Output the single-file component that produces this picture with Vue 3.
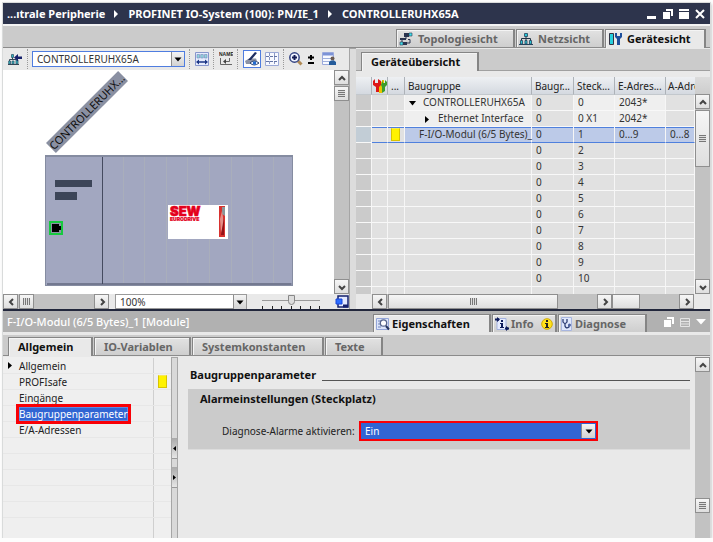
<script setup>
import { h, ref } from 'vue'

const paths = {
  up: 'M2 7 L5 4 L8 7',
  down: 'M2 4 L5 7 L8 4',
  left: 'M7 2 L4 5 L7 8',
  right: 'M4 2 L7 5 L4 8',
}
const Chevron = (props) =>
  h('svg', { width: 10, height: 10, viewBox: '0 0 10 10', 'aria-hidden': 'true' }, [
    h('path', { d: paths[props.dir], fill: 'none', stroke: '#444', 'stroke-width': 2 }),
  ])
Chevron.props = ['dir']

const Caret = () =>
  h('svg', { width: 8, height: 5, viewBox: '0 0 8 5', 'aria-hidden': 'true' }, [
    h('path', { d: 'M0.5 0.5 H7.5 L4 4.5 Z', fill: '#000' }),
  ])

const device = ref('CONTROLLERUHX65A')
const zoom = ref('100%')
const slider = ref(50)
const alarm = ref('Ein')

const rows = [
  { name: 'CONTROLLERUHX65A', kind: 'root', rack: '0', slot: '0', e: '2043*', a: '' },
  { name: 'Ethernet Interface', kind: 'child', rack: '0', slot: '0 X1', e: '2042*', a: '' },
  { name: 'F-I/O-Modul (6/5 Bytes)_', kind: 'module', rack: '0', slot: '1', e: '0...9', a: '0...8' },
  ...[2, 3, 4, 5, 6, 7, 8, 9, 10].map((n) => ({ name: '', kind: 'empty', rack: '0', slot: String(n), e: '', a: '' })),
]
const nav = [
  { label: 'Allgemein', open: true },
  { label: 'PROFIsafe', mark: true },
  { label: 'Eingänge' },
  { label: 'Baugruppenparameter', active: true },
  { label: 'E/A-Adressen' },
  {}, {}, {}, {}, {}, {},
]
const slots = [78, 99, 121, 142, 164, 186, 207, 228]
</script>

<template>
  <div class="window">
    <header class="titlebar">
      <nav class="crumbs">
        <span>...ıtrale Peripherie</span>
        <svg width="5" height="8" viewBox="0 0 5 8"><path d="M0 0 L4 4 L0 8Z" fill="#fff" /></svg>
        <span>PROFINET IO-System (100): PN/IE_1</span>
        <svg width="5" height="8" viewBox="0 0 5 8"><path d="M0 0 L4 4 L0 8Z" fill="#fff" /></svg>
        <span>CONTROLLERUHX65A</span>
      </nav>
      <div class="winbuttons">
        <button aria-label="Minimieren"><svg width="10" height="10" viewBox="0 0 10 10"><path d="M0 7H9V10H0Z" fill="#fff" /></svg></button>
        <button aria-label="Wiederherstellen"><svg width="10" height="10" viewBox="0 0 10 10"><path d="M3 0H10V7H8V2H3Z M0 3H7V10H0Z" fill="#fff" /></svg></button>
        <button aria-label="Maximieren"><svg width="10" height="10" viewBox="0 0 10 10"><path d="M0 0H10V2H0Z M0 3H10V10H0Z" fill="#fff" /></svg></button>
        <button aria-label="Schließen"><svg width="10" height="10" viewBox="0 0 10 10"><path d="M1 1L9 9M9 1L1 9" stroke="#fff" stroke-width="2" /></svg></button>
      </div>
    </header>

    <div class="viewbar">
      <button class="tab view topo">
        <svg width="14" height="14" viewBox="0 0 14 14"><path d="M3 11V7H7V3M9 7.500H11V11H8" fill="none" stroke="#2b3550" /><path d="M5 1H10V5H5Z" fill="#2b3550" /><path d="M10 1H13V4H10Z" fill="#3fe0ea" stroke="#2b3550" stroke-width=".6" /><path d="M1 6H7V8H1Z" fill="#2b3550" /><path d="M3 10H8V13H3Z" fill="#2b3550" /><path d="M1 10H4V13H1Z" fill="#3fe0ea" stroke="#2b3550" stroke-width=".6" /></svg>
        Topologiesicht
      </button>
      <button class="tab view netz">
        <svg width="14" height="14" viewBox="0 0 14 14"><path d="M7 4V9M2.500 9V6.500H11.500V9" fill="none" stroke="#234" /><path d="M5.500 1.500H8.500V4.500H5.500ZM1.500 8.500H3.500V12H1.500ZM6 8.500H8V12H6ZM10.500 8.500H12.500V12H10.500Z" fill="#2cc7d6" stroke="#26435c" stroke-width=".8" /><path d="M0 12.500H14" stroke="#26435c" /></svg>
        Netzsicht
      </button>
      <button class="tab view geraet on">
        <svg width="14" height="14" viewBox="0 0 14 14"><path d="M1.500 1.500H5.500V12.500H1.500Z" fill="#27cfdc" stroke="#334" /><path d="M7 1V5L9 7V13H12V7L14 5V1H12V4H9V1Z" fill="#1d4f9c" /></svg>
        Gerätesicht
      </button>
    </div>

    <main class="upper">
      <section class="device-pane">
        <div class="toolbar">
          <button class="tool" aria-label="Gerät"><svg width="15" height="14" viewBox="0 0 15 14"><path d="M4.500 5V8M1.500 9V7.500H8" stroke="#345" fill="none" /><path d="M3.500 2.500H5.500V5.500H3.500ZM.7 9H2.500V12H.7ZM4 9H6V12H4ZM8 8H10V12H8Z" fill="#2fb5be" stroke="#345c70" stroke-width=".8" /><path d="M6 5.500L10 2V4.500H14V7H10V9.500Z" fill="#15206b" /><path d="M0 12.500H11" stroke="#345" /></svg></button>
          <i class="sep"></i>
          <label class="combo devsel">
            <select v-model="device" aria-label="Gerät auswählen"><option>CONTROLLERUHX65A</option></select>
            <span class="drop"><Caret /></span>
          </label>
          <i class="sep"></i>
          <button class="tool" aria-label="Breite"><svg width="14" height="14" viewBox="0 0 14 14"><path d="M.5.500H13.500V13.500H.5Z" fill="#e6ecfd" stroke="#8796cc" /><path d="M2 2.500H4.500V6H2ZM5.700 2.500H8.300V6H5.700ZM9.500 2.500H12V6H9.500Z" fill="#8fd4dc" stroke="#7387b8" stroke-width=".6" /><path d="M1 10L4 7.500V9.300H10V7.500L13 10L10 12.500V10.700H4V12.500Z" fill="#1b3585" /></svg></button>
          <i class="sep"></i>
          <button class="tool" aria-label="Namen anzeigen"><svg width="14" height="14" viewBox="0 0 14 14"><text x="0" y="4" font-family="Liberation Sans" font-size="5" font-weight="700" fill="#222">NAME</text><path d="M1.500 6V12.500H13M10.500 6V9.500H6" stroke="#666" fill="none" /><path d="M4 9.500L7 7V12Z" fill="#444" /></svg></button>
          <i class="sep"></i>
          <button class="tool active" aria-label="Beschriftung"><svg width="16" height="16" viewBox="0 0 16 16"><path d="M1 10L5 7.500H12L13 10L10 13H2Z" fill="#8c93a5" /><path d="M4 9L11 1L13 2L7 9Z" fill="#1d2d60" /><path d="M6 12Q10 8 15 12Q10 16 6 12Z" fill="#fff" stroke="#26406f" /><circle cx="10.500" cy="12" r="1.800" fill="#226bd0" /></svg></button>
          <button class="tool" aria-label="Raster"><svg width="14" height="14" viewBox="0 0 14 14"><path d="M.5.500H13.500V13.500H.5Z" fill="#f7f9ff" stroke="#9ba9d6" /><path d="M4.500 1V13M9.500 1V13" stroke="#8a98c2" stroke-dasharray="3 1" /><path d="M1 4.500H13M1 9.500H13" stroke="#6374a4" stroke-dasharray="3 1" /></svg></button>
          <i class="sep"></i>
          <button class="tool" aria-label="Vergrößern"><svg width="14" height="14" viewBox="0 0 14 14"><path d="M9 9L12.500 12.500" stroke="#b08a55" stroke-width="3" /><circle cx="5.500" cy="5.500" r="4.700" fill="#f0f4ff" stroke="#354583" stroke-width="1.500" /><path d="M3 5.500H8M5.500 3V8" stroke="#141c54" stroke-width="2" /></svg></button>
          <button class="tool" aria-label="Zoomstufen"><svg width="8" height="10" viewBox="0 0 8 10"><path d="M1 3.500H7M4 1V6M1 9H7" stroke="#000" stroke-width="2" fill="none" /></svg></button>
          <button class="tool last" aria-label="Ansicht"><svg width="14" height="14" viewBox="0 0 14 14"><path d="M.5.500H11.500V12.500H.5Z" fill="#f8faff" stroke="#9aa9dc" /><path d="M1 1H11V3.500H1Z" fill="#7c93d6" /><path d="M1 6.500H11M1 9.500H11" stroke="#9fb0dc" /><circle cx="10.500" cy="6.500" r="2" fill="#6a5a50" /><path d="M7 13V10L9 8.500H12L14 10V13Z" fill="#245c9b" /></svg></button>
        </div>
        <div class="stage">
          <div class="canvas">
            <div class="tag">CONTROLLERUHX...</div>
            <svg class="rack" width="248" height="131" viewBox="0 0 248 131">
              <rect x=".5" y=".5" width="247" height="130" fill="#a2a7c0" stroke="#858ca1" />
              <path d="M1 1.500H247" stroke="#858ca1" />
              <path v-for="x in slots" :key="x" :d="`M${x}.5 2V128`" stroke="#a9aebb" />
              <path d="M57.500 2V129M2 129H246.500" stroke="#454b60" />
              <path d="M10 25H47V32H10ZM10 37H32V45H10Z" fill="#3c4558" />
              <rect x="5" y="67" width="12" height="12" fill="#8d93a5" stroke="#17c93f" stroke-width="2" />
              <path d="M7 69H14V71H16V75H14V77H7Z" fill="#000" />
              <rect x="123" y="50" width="60" height="34" fill="#fff" />
              <text x="125" y="61" font-family="Inter" font-weight="900" font-size="13" fill="#e4001b" stroke="#e4001b" stroke-width=".6">SEW</text>
              <text x="125" y="66" font-family="Inter" font-weight="900" font-size="5" fill="#e4001b" stroke="#e4001b" stroke-width=".2">EURODRIVE</text>
              <rect x="174" y="51" width="6" height="31" fill="#d8322f" />
              <path d="M177 52H180V61L177 59Z" fill="#8b9599" /><path d="M175 64L177 56L179 68L176 78Z" fill="#e58e88" /><path d="M179 62V80H176Z" fill="#941319" />
            </svg>
          </div>
          <div class="vscroll">
            <button class="sb" aria-label="Nach oben"><Chevron dir="up" /></button>
            <span class="sb thumb"><i class="grip"></i></span>
            <button class="sb end" aria-label="Nach unten"><Chevron dir="down" /></button>
          </div>
        </div>
        <div class="stagebar">
          <div class="hscroll mini">
            <button class="sb" aria-label="Nach links"><Chevron dir="left" /></button>
            <span class="sb thumb"><i class="grip v"></i></span>
            <button class="sb end" aria-label="Nach rechts"><Chevron dir="right" /></button>
          </div>
          <label class="combo zoomsel">
            <select v-model="zoom" aria-label="Zoom"><option>100%</option></select>
            <span class="drop"><Caret /></span>
          </label>
          <div class="slider">
            <input v-model="slider" type="range" min="0" max="100" aria-label="Zoomregler" />
            <div class="ticks"><i v-for="n in 7" :key="n"></i></div>
          </div>
          <button class="tool" aria-label="Übersicht"><svg width="14" height="14" viewBox="0 0 14 14"><path d="M3 1H13V12H3Z" fill="#e3e9ff" stroke="#15206e" stroke-width="1.500" /><path d="M8 11H13" stroke="#15206e" stroke-width="3" /><path d="M1 4H7V9H1Z" fill="#2c6dff" stroke="#1846d8" /></svg></button>
        </div>
      </section>

      <div class="divider"></div>

      <section class="overview">
        <div class="strip"><button class="tab on gu">Geräteübersicht</button></div>
        <div class="tablearea">
          <div class="tablewrap">
            <table>
              <colgroup><col class="c-head" /><col class="c-ico" /><col class="c-dot" /><col /><col class="c-rack" /><col class="c-slot" /><col class="c-e" /><col class="c-a" /></colgroup>
              <thead>
                <tr>
                  <th></th>
                  <th class="ico"><svg width="14" height="14" viewBox="0 0 14 14"><path d="M6 1L9 3V1L11 1V5L9 7V14H6V7Z" fill="#e9c400" /><path d="M10 1V4H12V1L14 3V6L12 8V12L9 14V8L8 6Z" fill="#3d9c2b" /><path d="M2 0V4H5V0L8 2V6L6 8V13H3V8L0 6V2Z" fill="#dd1717" /></svg></th>
                  <th>...</th><th>Baugruppe</th><th>Baugr...</th><th>Steck...</th><th>E-Adres...</th><th>A-Adre</th>
                </tr>
              </thead>
              <tbody>
                <tr v-for="r in rows" :key="r.slot" :class="r.kind">
                  <td class="rh"></td><td></td>
                  <td class="mk"><i v-if="r.kind === 'module'" class="mark"></i></td>
                  <td class="nm">
                    <svg v-if="r.kind === 'root'" width="7" height="5" viewBox="0 0 7 5"><path d="M0 0H7L3.500 4.500Z" fill="#000" /></svg>
                    <svg v-if="r.kind === 'child'" width="5" height="7" viewBox="0 0 5 7"><path d="M0 0L4 3.500L0 7Z" fill="#000" /></svg>
                    <span>{{ r.name }}</span>
                  </td>
                  <td>{{ r.rack }}</td><td>{{ r.slot }}</td><td>{{ r.e }}</td><td>{{ r.a }}</td>
                </tr>
                <tr class="empty rest"><td class="rh"></td><td v-for="n in 7" :key="n"></td></tr>
              </tbody>
            </table>
          </div>
          <div class="vscroll short">
            <div class="cap"></div>
            <button class="sb" aria-label="Nach oben"><Chevron dir="up" /></button>
            <span class="sb thumb tall"><i class="grip"></i></span>
            <button class="sb end" aria-label="Nach unten"><Chevron dir="down" /></button>
          </div>
        </div>
        <div class="scrollrow">
          <div class="hscroll">
            <button class="sb" aria-label="Nach links"><Chevron dir="left" /></button>
            <span class="sb thumb wide"><i class="grip v"></i></span>
            <button class="sb end" aria-label="Nach rechts"><Chevron dir="right" /></button>
          </div>
          <div class="hscroll">
            <span class="sb thumb part"></span>
            <button class="sb end" aria-label="Weiter nach rechts"><Chevron dir="right" /></button>
          </div>
        </div>
      </section>
    </main>

    <header class="inspector">
      <h2>F-I/O-Modul (6/5 Bytes)_1 [Module]</h2>
      <div class="insptabs">
        <button class="tab on prop">
          <svg width="14" height="14" viewBox="0 0 14 14"><path d="M.5 1.500H12.500V12.500H.5Z" fill="#dce5fb" stroke="#93a5d8" /><path d="M2 4H5M2 7H4M2 10H5" stroke="#7085bb" /><circle cx="7.500" cy="6" r="3.200" fill="#fff" stroke="#58668c" stroke-width="1.300" /><path d="M10 9L13 12.500" stroke="#26345e" stroke-width="2" /></svg>
          Eigenschaften
        </button>
        <button class="tab info">
          <svg width="14" height="14" viewBox="0 0 14 14"><path d="M2 1.500H11V12.500H2Z" fill="#e4eafe" stroke="#a4b2df" /><path d="M0 2.500H4M10 11.500H14" stroke="#0d1a5b" stroke-width="2" /><path d="M2 0L5 2.500L2 5ZM11 9L14 11.500L11 14Z" fill="#0d1a5b" /><path d="M6 3H8V5H6ZM5 6H8V10H9V11H5V10H6V7H5Z" fill="#0d1a5b" /></svg>
          <span>Info</span>
          <svg class="badge" width="12" height="12" viewBox="0 0 12 12"><circle cx="6" cy="6" r="5.300" fill="#ffe21a" stroke="#d1ab00" /><path d="M5 2H7V4H5ZM4 5H7V9H8V10H4V9H5V6H4Z" fill="#222" /></svg>
        </button>
        <button class="tab diag">
          <svg width="12" height="14" viewBox="0 0 12 14"><path d="M.5.500H10.500V13.500H.5Z" fill="#dfe7fc" stroke="#a8b6e0" /><path d="M2 2V5Q4 8 6 5V2M4 7V9Q5 12 8 10V8" fill="none" stroke="#2d3d72" stroke-width="1.300" /><circle cx="8.500" cy="8" r="1.500" fill="#4f62a0" /></svg>
          Diagnose
        </button>
      </div>
      <div class="inspbuttons">
        <button aria-label="Ablösen"><svg width="10" height="10" viewBox="0 0 10 10"><path d="M3 0H10V7H8V2H3Z M0 3H7V10H0Z" fill="#fff" /></svg></button>
        <button aria-label="Aufteilen"><svg width="10" height="10" viewBox="0 0 10 10"><path d="M.5 1.500H9.500V9.500H.5ZM0 4.500H10M0 7H10" fill="none" stroke="#e4e4e4" /></svg></button>
        <button aria-label="Einklappen"><svg width="10" height="10" viewBox="0 0 10 10"><path d="M0 2H10L5 7.500Z" fill="#fff" /></svg></button>
      </div>
    </header>

    <div class="proptabs">
      <button class="tab on t1">Allgemein</button>
      <button class="tab t2">IO-Variablen</button>
      <button class="tab t3">Systemkonstanten</button>
      <button class="tab t4">Texte</button>
    </div>

    <div class="lower">
      <nav class="tree">
        <div v-for="(n, i) in nav" :key="i" class="node">
          <div class="cell">
            <svg v-if="n.open" class="exp" width="5" height="7" viewBox="0 0 5 7"><path d="M0 0L4 3.500L0 7Z" fill="#000" /></svg>
            <a v-if="n.label" href="#" :class="{ sel: n.active }">{{ n.label }}</a>
          </div>
          <div class="flag"><i v-if="n.mark" class="mark"></i></div>
        </div>
      </nav>
      <div class="splitter">
        <button aria-label="Zuklappen"><svg width="3" height="5" viewBox="0 0 3 5"><path d="M3 0V5L0 2.500Z" /></svg></button>
        <button aria-label="Aufklappen"><svg width="3" height="5" viewBox="0 0 3 5"><path d="M0 0V5L3 2.500Z" /></svg></button>
      </div>
      <section class="content">
        <div class="heading"><h3>Baugruppenparameter</h3><hr /></div>
        <div class="group">
          <h4>Alarmeinstellungen (Steckplatz)</h4>
          <div class="field">
            <label for="alarm">Diagnose-Alarme aktivieren:</label>
            <div class="combo alarm">
              <select id="alarm" v-model="alarm"><option>Ein</option><option>Aus</option></select>
              <span class="drop"><Caret /></span>
            </div>
          </div>
        </div>
      </section>
      <div class="vscroll props">
        <button class="sb" aria-label="Nach oben"><Chevron dir="up" /></button>
        <span class="sb thumb end"><i class="grip"></i></span>
      </div>
    </div>
  </div>
</template>

<style>
body { margin: 0; background: #fdfdfd; }
</style>

<style scoped>
* { box-sizing: border-box; }
.window {
  margin: 3px 3px 0 3px;
  min-height: calc(100vh - 7px);
  display: flex;
  flex-direction: column;
  background: #e9e9e9;
  box-shadow: 0 0 0 1px #d9dbdb, 1px 1px 3px #aaa;
  font-family: "Noto Sans", "Open Sans", sans-serif;
  font-size: 10px;
  line-height: 14px;
  color: #222;
}
button { margin: 0; padding: 0; border: 0; background: none; font: inherit; color: inherit; display: flex; align-items: center; justify-content: center; white-space: nowrap; }
svg { flex: none; display: block; }
h2, h3, h4 { margin: 0; white-space: nowrap; }
.titlebar { height: 21px; background: #2d344c; color: #fff; display: flex; justify-content: space-between; align-items: center; padding: 0 5px 0 4px; }
.crumbs { display: flex; align-items: center; gap: 9px; font-size: 11px; font-weight: 700; white-space: nowrap; }
.winbuttons { display: flex; gap: 6px; }
.viewbar { height: 24px; border-top: 2px solid #f3f3f3; border-bottom: 1px solid #8b8b8b; background: #cbcbcb; display: flex; justify-content: flex-end; align-items: flex-end; padding-right: 4px; gap: 1px; }
.tab { height: 18px; padding-left: 9px; justify-content: flex-start; border: 1px solid #858585; border-bottom: 0; border-right-width: 2px; background: linear-gradient(#e2e2e2, #cecece); color: #666; font-size: 11px; font-weight: 700; box-shadow: inset 1px 1px 0 #f4f4f4; }
.tab.on { background: #e9e9e9; color: #111; }
.tab.view { gap: 5px; padding-left: 2px; }
.view.on { height: 19px; margin-bottom: -1px; }
.topo { width: 119px; }
.netz { width: 88px; }
.geraet { width: 101px; }
.upper { display: grid; grid-template-columns: minmax(0, 346fr) 7px minmax(0, 354fr); border-bottom: 2px solid #22273c; }
.device-pane { display: flex; flex-direction: column; }
.toolbar { height: 22px; display: flex; align-items: center; gap: 4px; padding: 0 13px 0 5px; }
.sep { width: 1px; height: 20px; border-left: 1px dotted #9a9a9a; flex: none; }
.sep + .tool { margin-left: 1px; }
.active { width: 18px; height: 18px; border: 1px solid #4f7de0; background: #fff; }
.tool.last { margin-left: auto; }
.combo { display: grid; background: #fff; border: 1px solid #9a9a9a; }
.combo select { grid-area: 1 / 1; width: 100%; appearance: none; border: 0; border-radius: 0; margin: 0; padding: 0 0 0 4px; background: transparent; font: inherit; color: #333; outline: 0; }
.drop { grid-area: 1 / 1; justify-self: end; width: 13px; display: flex; align-items: center; justify-content: center; background: linear-gradient(#f4f4f4, #d2d2d2); border-left: 1px solid #8d8d8d; pointer-events: none; }
.devsel { flex: 0 1 153px; height: 16px; border-color: #4f7de0; }
.stage { flex: 1; display: flex; }
.canvas { position: relative; flex: 1; background: #fff; overflow: hidden; }
.tag { position: absolute; left: 33px; top: 35px; width: 102px; height: 14px; background: #8a90a2; transform: rotate(-45deg); font-size: 11px; line-height: 14px; color: #111; text-align: center; white-space: nowrap; }
.rack { position: absolute; left: 42px; top: 85px; }
.vscroll { width: 15px; background: #c2c2c2; display: flex; flex-direction: column; flex: none; }
.hscroll { height: 15px; background: #c2c2c2; display: flex; min-width: 0; }
.sb { width: 15px; height: 15px; flex: none; border: 1px solid #8f8f8f; background: linear-gradient(#f6f6f6, #dedede); display: flex; align-items: center; justify-content: center; }
.vscroll .thumb { margin-top: 1px; }
.hscroll .thumb { margin-left: 1px; }
.vscroll .end { margin-top: auto; }
.hscroll .end { margin-left: auto; }
.vscroll.props { padding-bottom: 25px; }
.grip { width: 7px; height: 7px; background: repeating-linear-gradient(#777 0 1px, #ddd 1px 2px); }
.grip.v { background: repeating-linear-gradient(90deg, #777 0 1px, #ddd 1px 2px); }
.stagebar { height: 15px; display: flex; align-items: center; }
.mini { width: 106px; margin-right: 6px; }
.zoomsel { width: 132px; height: 15px; }
.slider { width: 58px; margin: 0 auto; height: 15px; display: flex; flex-direction: column; justify-content: space-between; }
.slider input { appearance: none; width: 100%; height: 12px; margin: 0; background: linear-gradient(#999, #999) center / 100% 1px no-repeat; }
.slider input::-webkit-slider-thumb { appearance: none; width: 7px; height: 10px; border: 1px solid #888; border-radius: 0 0 4px 4px; background: #ddd; }
.ticks { height: 3px; display: flex; justify-content: space-between; }
.ticks i { width: 1px; background: #222; }
.divider { background: #dcdcdc; border-left: 1px solid #a5a5a5; border-top: 1px solid #a5a5a5; }
.overview { display: flex; flex-direction: column; }
.strip { height: 23px; margin-bottom: 6px; background: #cbcbcb; border-top: 1px solid #e9e9e9; border-bottom: 1px solid #a0a0a0; display: flex; align-items: flex-end; padding-left: 5px; }
.gu { width: 118px; height: 19px; margin-bottom: -1px; }
.tablearea { display: flex; height: 217px; }
.tablewrap { flex: 1; min-width: 0; overflow: hidden; }
table { width: 100%; table-layout: fixed; border-collapse: separate; border-spacing: 0; }
.c-head { width: 16px; } .c-ico { width: 16px; } .c-dot { width: 17px; }
.c-rack { width: 42px; } .c-slot { width: 41px; } .c-e { width: 51px; } .c-a { width: 29px; }
th, td { padding: 0 0 0 3px; overflow: hidden; white-space: nowrap; text-align: left; font-weight: 400; }
th { height: 18px; line-height: 16px; border-right: 1px solid #adb2b8; border-bottom: 1px solid #c3c8cd; background: linear-gradient(#eef0f3, #d4d9e0); color: #222; }
th:last-child { border-right: 0; padding-left: 2px; }
th.ico { padding: 0 0 0 1px; }
td { height: 16px; line-height: 15px; padding-left: 4px; border-right: 1px solid #f6f6f6; border-bottom: 1px solid #f8f8f8; background: #e1e1e1; color: #333; }
td.rh { background: #cbcbcb; }
.root td:nth-child(n+4):nth-child(-n+7):not(:nth-child(5)), .child td:nth-child(n+4):nth-child(-n+7):not(:nth-child(5)) { background: #efefef; }
.module td:nth-child(n+4) { background: #bccae8; }
.module td:nth-child(n+2) { border-bottom-color: #4f80dd; box-shadow: inset 0 1px 0 #4f80dd; }
.module td.rh { background: #c2cdd6; }
td.mk { padding: 0 0 0 3px; }
.mark { display: block; width: 9px; height: 13px; background: #fff200; border: 1px solid #d8c400; border-top-color: #f6e75a; }
td.nm svg { display: inline-block; vertical-align: middle; }
.root .nm span { margin-left: 7px; }
.child .nm { padding-left: 20px; }
.child .nm span { margin-left: 8px; }
.module .nm { padding-left: 14px; overflow: visible; }
.rest td { height: 8px; border-bottom: 0; line-height: 7px; }
.cap { height: 17px; background: linear-gradient(#dcdcdc, #cdcdcd); }
.short .tall { height: 57px; }
.scrollrow { display: grid; grid-template-columns: 240fr 82fr; padding: 0 16px; }
.wide { width: 71%; }
.hscroll .part { width: 28px; margin-left: 0; }
.inspector { height: 21px; background: #b1b1b1; display: flex; align-items: flex-end; padding: 0 4px; }
.inspector h2 { flex: 1; align-self: center; font-size: 11px; line-height: 15px; font-weight: 500; color: #fff; }
.insptabs { display: flex; gap: 1px; }
.insptabs .tab { gap: 2px; padding-left: 2px; }
.prop { width: 118px; } .info { width: 65px; } .diag { width: 89px; }
.badge { margin-left: 5px; }
.inspbuttons { display: flex; gap: 6px; align-self: center; margin-left: 17px; }
.proptabs { height: 24px; border-top: 3px solid #e9e9e9; border-bottom: 1px solid #8b8b8b; background: #cbcbcb; display: flex; align-items: flex-end; padding-left: 5px; gap: 1px; }
.proptabs .on { height: 19px; margin-bottom: -1px; }
.t1 { width: 85px; } .t2 { width: 97px; } .t3 { width: 132px; } .t4 { width: 58px; }
.lower { flex: 1; display: flex; padding-top: 1px; }
.tree { width: 168px; flex: none; padding-top: 1px; background: #efefef; display: flex; flex-direction: column; }
.node { height: 16px; display: grid; grid-template-columns: 151px 1fr; border-bottom: 1px solid #e7e7e7; }
.node:last-child { flex: 1; border-bottom: 0; }
.cell { display: grid; grid-template-columns: 11px 1fr; align-items: center; padding-left: 5px; border-right: 1px solid #cfcfcf; }
.cell a { grid-column: 2; justify-self: start; color: #222; text-decoration: none; line-height: 14px; }
.cell .exp { grid-area: 1 / 1; }
.cell a.sel { background: #3165d3; color: #fff; outline: 3px solid #f90006; box-shadow: inset 0 0 0 1px #5f89e0; }
.flag { padding: 1px 0 0 4px; }
.splitter { width: 7px; flex: none; border: 1px solid #a6a6a6; border-bottom: 0; background: #d9d9d9; display: flex; flex-direction: column; gap: 8px; padding-top: 80px; }
.splitter button { width: 5px; height: 21px; background: linear-gradient(#aaa, #e6e6e6); border-bottom: 1px solid #999; }
.content { flex: 1; min-width: 0; padding: 10px 5px 0 10px; }
.heading { display: flex; align-items: center; gap: 6px; height: 16px; padding-left: 2px; margin-bottom: 6px; }
h3, h4 { font-size: 11px; line-height: 16px; font-weight: 700; color: #111; }
hr { flex: 1; margin: 10px 0 0; border: 0; border-top: 1px solid #555; }
.group { background: #cbcbcb; border-bottom: 1px solid #dcdcdc; height: 61px; padding: 2px 12px; }
.field { display: flex; align-items: center; gap: 7px; margin-top: 14px; padding-left: 22px; }
.field label { width: 130px; white-space: nowrap; }
.alarm { flex: 0 1 239px; height: 20px; border: 2px solid #f90006; background: #3165d3; }
.alarm select { color: #fff; }
.alarm .drop { width: 14px; margin: 1px; }
</style>
